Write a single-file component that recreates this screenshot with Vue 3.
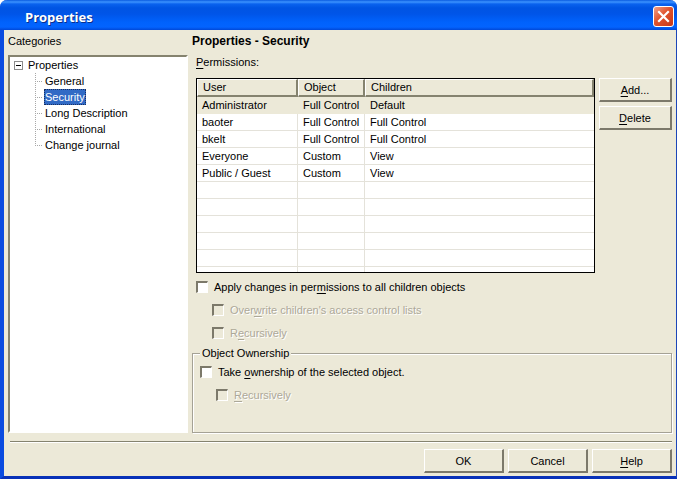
<script setup>
import { ref } from 'vue'

const expanded = ref(true)
const selected = ref('Security')
const categories = ['General', 'Security', 'Long Description', 'International', 'Change journal']

const permissions = [
  { user: 'Administrator', object: 'Full Control', children: 'Default' },
  { user: 'baoter', object: 'Full Control', children: 'Full Control' },
  { user: 'bkelt', object: 'Full Control', children: 'Full Control' },
  { user: 'Everyone', object: 'Custom', children: 'View' },
  { user: 'Public / Guest', object: 'Custom', children: 'View' },
]
const current = ref('Administrator')
const emptyRows = 6

const applyAll = ref(false)
const takeOwnership = ref(false)
</script>

<template>
  <div class="window">
    <header class="titlebar">
      <h1>Properties</h1>
      <button class="close" type="button" aria-label="Close">
        <svg viewBox="0 0 17 17" width="17" height="17" aria-hidden="true">
          <path d="M4 4 L13 13 M13 4 L4 13" stroke="#fff" stroke-width="2.2" stroke-linecap="square" />
        </svg>
      </button>
    </header>

    <main class="content">
      <section class="categories">
        <h2 id="cat-label">Categories</h2>
        <div class="tree" aria-labelledby="cat-label">
          <div class="root">
            <button class="expander" type="button" :aria-expanded="expanded" aria-label="Toggle Properties" @click="expanded = !expanded">
              <svg viewBox="0 0 9 9" width="9" height="9" aria-hidden="true" shape-rendering="crispEdges">
                <rect x="0.5" y="0.5" width="8" height="8" fill="#fff" stroke="#8c8c8c" />
                <path d="M2 4.5H7" stroke="#000" />
                <path v-if="!expanded" d="M4.5 2V7" stroke="#000" />
              </svg>
            </button>
            <span>Properties</span>
          </div>
          <ul v-if="expanded">
            <li v-for="name in categories" :key="name">
              <button type="button" class="node" :class="{ selected: selected === name }" @click="selected = name">{{ name }}</button>
            </li>
          </ul>
        </div>
      </section>

      <section class="panel">
        <h2 class="heading">Properties - Security</h2>
        <div class="permissions">
          <p id="perm-label" class="caption"><u>P</u>ermissions:</p>
          <div class="list-row">
            <div class="list">
              <table aria-labelledby="perm-label">
                <colgroup>
                  <col class="col-user" />
                  <col class="col-object" />
                  <col />
                </colgroup>
                <thead>
                  <tr><th>User</th><th>Object</th><th>Children</th></tr>
                </thead>
                <tbody>
                  <tr v-for="p in permissions" :key="p.user" :class="{ current: current === p.user }" @click="current = p.user">
                    <td>{{ p.user }}</td><td>{{ p.object }}</td><td>{{ p.children }}</td>
                  </tr>
                  <tr v-for="n in emptyRows" :key="n" class="empty"><td></td><td></td><td></td></tr>
                </tbody>
              </table>
            </div>
            <div class="actions">
              <button type="button" class="btn"><span><u>A</u>dd...</span></button>
              <button type="button" class="btn"><span><u>D</u>elete</span></button>
            </div>
          </div>
          <label class="check"><input v-model="applyAll" type="checkbox" /><span>Apply changes in per<u>m</u>issions to all children objects</span></label>
          <label class="check sub" :class="{ off: !applyAll }"><input type="checkbox" :disabled="!applyAll" /><span>Over<u>w</u>rite children's access control lists</span></label>
          <label class="check sub" :class="{ off: !applyAll }"><input type="checkbox" :disabled="!applyAll" /><span>R<u>e</u>cursively</span></label>
        </div>
        <fieldset>
          <legend>Object Ownership</legend>
          <label class="check"><input v-model="takeOwnership" type="checkbox" /><span>Take <u>o</u>wnership of the selected object.</span></label>
          <label class="check sub" :class="{ off: !takeOwnership }"><input type="checkbox" :disabled="!takeOwnership" /><span><u>R</u>ecursively</span></label>
        </fieldset>
      </section>
    </main>

    <footer>
      <button type="button" class="btn">OK</button>
      <button type="button" class="btn">Cancel</button>
      <button type="button" class="btn"><span><u>H</u>elp</span></button>
    </footer>
  </div>
</template>

<style>
body {
  background: #fff;
}
</style>

<style scoped>
.window {
  margin-right: 1px;
  border: solid #0a3fd0;
  border-width: 0 1px 3px 4px;
  border-color: #0a3fd0 #1c46b8 #0831b8 #0a4be0;
  border-radius: 7px 7px 0 0;
  background: #ece9d8;
  color: #000;
  font: 11px/16px "Liberation Sans", Arial, sans-serif;
}

h1, h2, p, ul {
  margin: 0;
  padding: 0;
  font-size: inherit;
  font-weight: normal;
}

button {
  font: inherit;
  color: inherit;
  padding: 0;
}

u {
  text-underline-offset: 2px;
}

.titlebar {
  display: flex;
  align-items: center;
  justify-content: space-between;
  height: 30px;
  margin: 0 -1px 0 -4px;
  padding: 3px 3px 0 25px;
  box-sizing: border-box;
  border-radius: 7px 7px 0 0;
  background: linear-gradient(#0a5be0 0, #3c93ff 2px, #0a62ee 4px, #0054e3 8px, #0055e8 14px, #0062fc 22px, #0364ff 27px, #0048d8 30px);
}

.titlebar h1 {
  font: bold 13px/18px "Open Sans", "Noto Sans", sans-serif;
  color: #fff;
  text-shadow: 1px 1px #0a2f8c;
}

.close {
  display: grid;
  place-items: center;
  width: 21px;
  height: 21px;
  border: 1px solid #fff;
  border-radius: 3px;
  background: linear-gradient(135deg, #f0a088, #e0532e 45%, #c8391a);
}

.content {
  display: grid;
  grid-template-columns: 180px minmax(0, 1fr);
  column-gap: 4px;
  padding: 3px 4px 0;
}

.categories {
  display: flex;
  flex-direction: column;
  gap: 6px;
}

.tree {
  flex: 1;
  padding: 0 4px;
  border: solid;
  border-width: 2px;
  border-color: #85836f #fff #fff #85836f;
  background: #fff;
}

.root {
  display: flex;
  align-items: center;
  gap: 5px;
}

.expander {
  display: flex;
  border: 0;
  background: none;
}

.tree ul {
  padding-left: 21px;
  list-style: none;
}

.tree li {
  display: flex;
  align-items: center;
  height: 16px;
  background-image: repeating-linear-gradient(#a8a8a8 0 1px, transparent 1px 2px), repeating-linear-gradient(90deg, #a8a8a8 0 1px, transparent 1px 2px);
  background-size: 1px 100%, 8px 1px;
  background-position: 0 0, 0 8px;
  background-repeat: no-repeat;
}

.tree li:last-child {
  background-size: 1px 8px, 8px 1px;
}

.node {
  margin-left: 9px;
  padding: 0 1px;
  border: 0;
  background: none;
  line-height: 16px;
}

.node.selected {
  background: #316ac5;
  color: #fff;
  outline: 1px dotted #182f60;
  outline-offset: -1px;
}

.heading {
  font-size: 12px;
  font-weight: bold;
}

.permissions {
  padding: 5px 0 0 4px;
}

.list-row {
  display: flex;
  gap: 4px;
  padding: 8px 0 2px;
}

.list {
  flex: 1;
  height: 193px;
  overflow: hidden;
  border: 1px solid #000;
  background: #fff;
}

table {
  width: 100%;
  table-layout: fixed;
  border-collapse: separate;
  border-spacing: 0;
}

.col-user {
  width: 101px;
}

.col-object {
  width: 67px;
}

th, td {
  box-sizing: border-box;
  height: 17px;
  padding: 0 0 0 5px;
  line-height: 15px;
  font-weight: normal;
  text-align: left;
  white-space: nowrap;
}

th {
  height: 18px;
  border: solid;
  border-width: 1px 2px 2px 1px;
  border-color: #fff #85836f #85836f #fff;
  background: #ece9d8;
}

td {
  border-right: 1px solid #e4e2da;
  border-bottom: 1px solid #e4e2da;
}

td:last-child {
  border-right: 0;
}

.current td {
  border-color: #ece9d8;
  background: #ece9d8;
}

.actions {
  display: flex;
  flex-direction: column;
  gap: 4px;
  width: 73px;
}

.btn {
  height: 24px;
  border: solid;
  border-width: 1px 2px 2px 1px;
  border-color: #fff #7c796a #7c796a #fff;
  background: #ece9d8;
}

.check {
  display: flex;
  align-items: center;
  gap: 6px;
  height: 23px;
}

.sub {
  padding-left: 16px;
}

.check input {
  appearance: none;
  width: 12px;
  height: 12px;
  margin: 0;
  border: solid;
  border-width: 2px 1px 1px 2px;
  border-color: #7c796a #fff #fff #7c796a;
  background: #fff;
}

.check input:checked {
  background: #316ac5;
}

.check input:disabled {
  background: #ece9d8;
}

.off {
  color: #aca899;
  text-shadow: 1px 1px #fff;
}

fieldset {
  min-width: 0;
  margin: 2px 0 0;
  padding: 0 7px 26px;
  border: 1px solid #a5a295;
  box-shadow: 1px 1px #fff, inset 1px 1px #fff;
}

legend {
  padding: 0 2px;
  background: #ece9d8;
  line-height: 14px;
}

footer {
  display: flex;
  justify-content: flex-end;
  gap: 4px;
  margin: 8px 4px 0 6px;
  padding: 7px 0 3px;
  border-top: 1px solid #85836f;
  box-shadow: inset 0 1px #fff;
}

footer .btn {
  width: 80px;
}
</style>
